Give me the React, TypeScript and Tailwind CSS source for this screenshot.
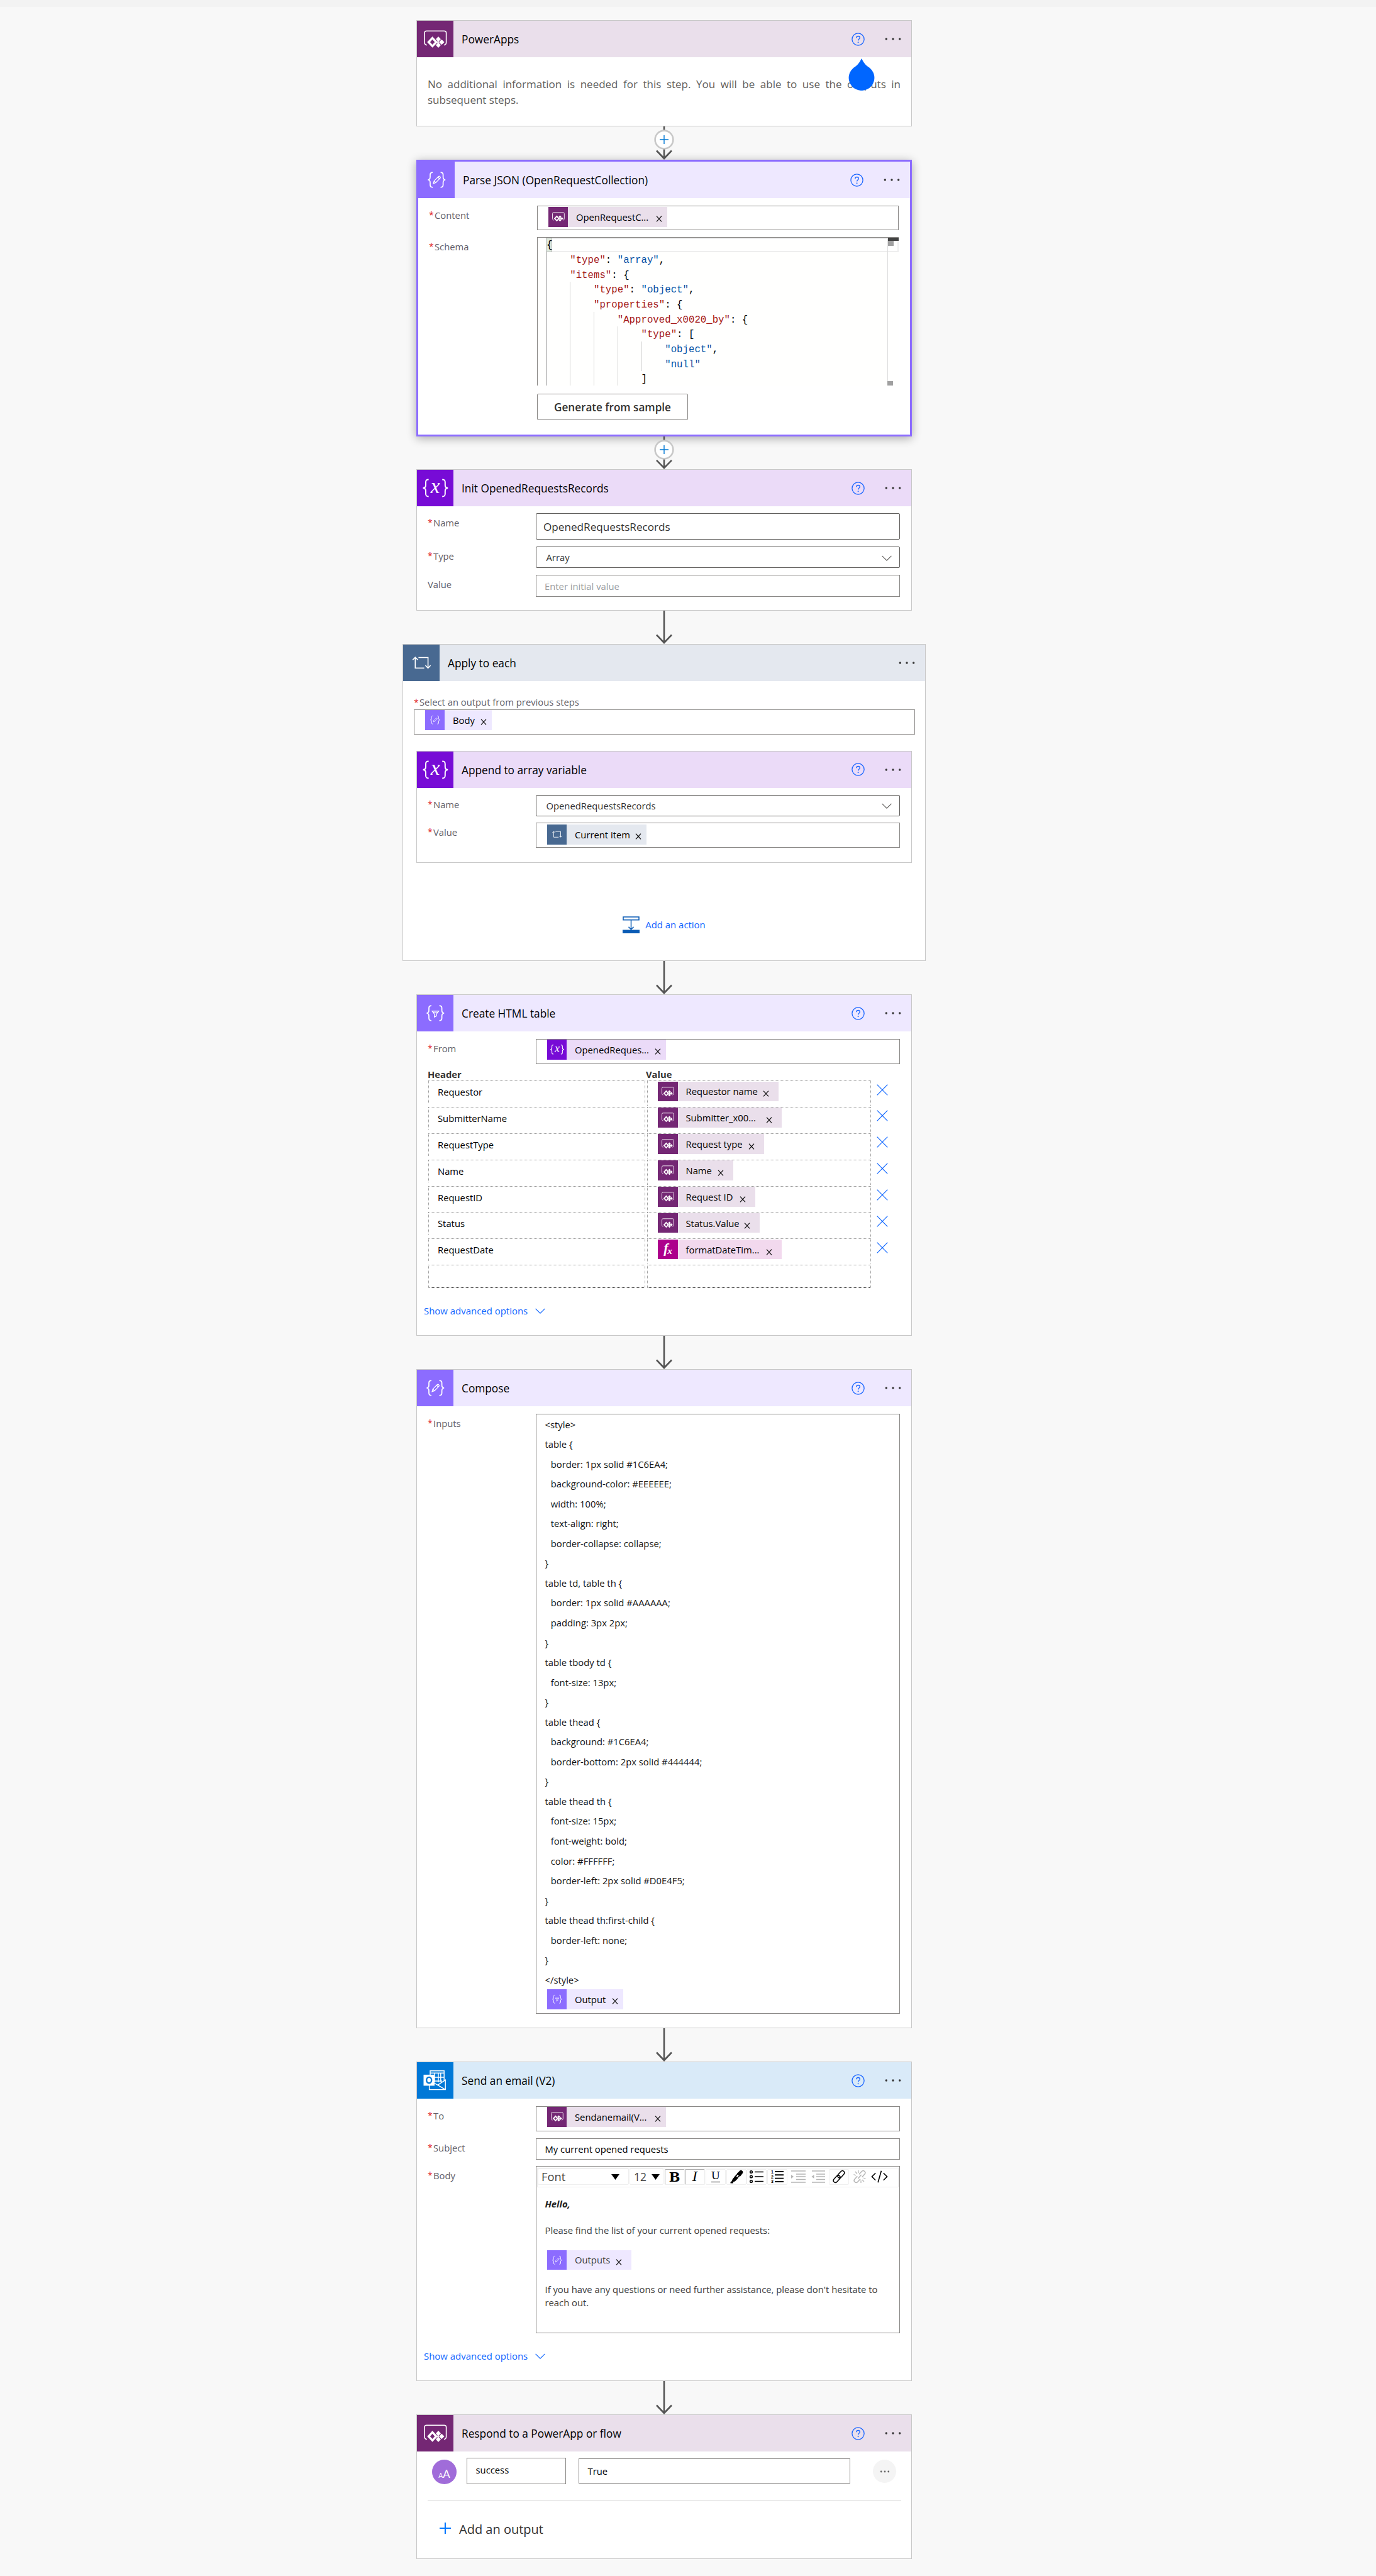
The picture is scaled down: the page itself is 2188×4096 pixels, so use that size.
import React from 'react';

type Kind = 'power' | 'compose' | 'variable' | 'loop' | 'table' | 'outlook' | 'fx';

const TILE: Record<Kind, string> = {
  power: 'bg-[#742774]',
  compose: 'bg-[#8c6cff]',
  variable: 'bg-[#770bd6]',
  loop: 'bg-[#486991]',
  table: 'bg-[#8c6cff]',
  outlook: 'bg-[#0078d7]',
  fx: 'bg-[#ad008c]',
};

const TINT: Record<Kind, string> = {
  power: 'bg-[#eadfeb]',
  compose: 'bg-[#eee8ff]',
  variable: 'bg-[#ebdbf8]',
  loop: 'bg-[#e4e8ef]',
  table: 'bg-[#eee8ff]',
  outlook: 'bg-[#d9eaf8]',
  fx: 'bg-[#f2d9ee]',
};

function SmallBraces() {
  return (
    <g fill="none" stroke="#fff" strokeWidth="1.7">
      <path d="M23 17.2c-3.2 0-4 1.2-4 3.8v3.6c0 2.6-.9 4.2-3.6 4.4 2.700.2 3.600 1.800 3.600 4.400V37c0 2.600.8 3.800 4 3.800" />
      <path d="M35.600 17.200c3.200 0 4 1.200 4 3.800v3.600c0 2.600.9 4.200 3.600 4.400-2.700.2-3.600 1.800-3.600 4.400V37c0 2.600-.8 3.800-4 3.800" />
    </g>
  );
}

function Glyph({ kind, className }: { kind: Kind; className: string }) {
  return (
    <svg viewBox="0 0 58 58" className={className}>
      {kind === 'power' && (
        <g>
          <path
            d="M15.800 38.800C13 38.300 12 36.800 12 34.600V19.600Q12 16.200 15.400 16.200H43.200Q46.600 16.200 46.600 19.600V34.600C46.600 36.800 45.600 38.300 43 38.800"
            fill="none"
            stroke="#fff"
            strokeWidth="1.600"
          />
          <path
            d="M24.600 25 33 33.900 24.600 42.800 16.200 33.900ZM24.600 29.800 20.900 33.900 24.600 38 28.300 33.900Z"
            fill="#fff"
            fillRule="evenodd"
          />
          <path
            d="M34 25 38 29.200 34 33.400 30 29.200ZM34 34.600 38 38.800 34 43 30 38.800ZM39.300 29.800 43.600 34 39.300 38.200 35 34ZM33 31.500 35.300 34 33 36.500 32 34Z"
            fill="#fff"
          />
        </g>
      )}
      {kind === 'compose' && (
        <g>
          <SmallBraces />
          <path
            d="M24 34.800 25.200 30.700 32.400 23.500Q33.300 22.800 34.200 23.500L35 24.300Q35.700 25.200 35 26.100L27.900 33.400ZM31.300 24.700 34 27.300M25.200 30.700 27.900 33.400"
            fill="none"
            stroke="#fff"
            strokeWidth="1.200"
          />
        </g>
      )}
      {kind === 'table' && (
        <g>
          <SmallBraces />
          <path
            d="M24 25.600H34.800L31.200 30.200V33.400L27.600 35.200V30.200ZM26 27.400H32.800"
            fill="none"
            stroke="#fff"
            strokeWidth="1.200"
          />
        </g>
      )}
      {kind === 'variable' && (
        <g>
          <g fill="none" stroke="#fff" strokeWidth="2">
            <path d="M18.600 15.600c-3.800 0-4.600 1.400-4.600 4.400v4.600c0 2.800-1 4.200-4.400 4.400 3.400.2 4.400 1.600 4.400 4.400V38c0 3 .8 4.400 4.600 4.400" />
            <path d="M40.200 15.600c3.800 0 4.600 1.400 4.600 4.400v4.600c0 2.800 1 4.200 4.400 4.400-3.400.2-4.400 1.600-4.400 4.400V38c0 3-.8 4.400-4.600 4.400" />
          </g>
          <text
            x="29.200"
            y="36.600"
            textAnchor="middle"
            fontSize="33"
            fill="#fff"
            fontFamily="'Liberation Serif', serif"
            fontStyle="italic"
          >
            x
          </text>
        </g>
      )}
      {kind === 'loop' && (
        <g fill="none" stroke="#fff" strokeWidth="1.600">
          <path d="M19.300 20.500V37.200H33.600M15.200 24.300 19.300 20.100 23.400 24.300" />
          <path d="M24.400 20.500H39.600V37M35.400 33 39.600 37.300 43.700 33" />
        </g>
      )}
      {kind === 'outlook' && (
        <g>
          <path
            d="M21 20V13.800H43.200V29M21 17.300H43.200M28 17V32M34 17V32M37.800 17V31M28 24H43M28 30H40M19.600 37V43.600H45.200V28.400L33 36.400 28 33.500M33 36.400 45.200 43.600"
            fill="none"
            stroke="#fff"
            strokeWidth="1.400"
          />
          <path d="M10.500 19.900H28V37.400H10.500Z" fill="#fff" />
          <ellipse cx="19.200" cy="28.600" rx="4" ry="4.700" fill="none" stroke="#0078d7" strokeWidth="2.400" />
        </g>
      )}
      {kind === 'fx' && (
        <g fill="#fff" fontFamily="'Liberation Serif', serif" fontStyle="italic" fontWeight="bold">
          <text x="17" y="39" fontSize="40">
            f
          </text>
          <text x="28" y="42" fontSize="28">
            x
          </text>
        </g>
      )}
    </svg>
  );
}

function Dots() {
  return (
    <svg viewBox="0 0 26 6" className="h-[6px] w-[26px]" fill="#333">
      <circle cx="2.300" cy="3" r="1.700" />
      <circle cx="13" cy="3" r="1.700" />
      <circle cx="23.700" cy="3" r="1.700" />
    </svg>
  );
}

function Help() {
  return (
    <svg viewBox="0 0 21 21" className="h-[21px] w-[21px]">
      <circle cx="10.500" cy="10.500" r="9.600" fill="none" stroke="#1a66ff" strokeWidth="1.300" />
      <path
        d="M7.800 8.200C7.800 6.500 9 5.500 10.600 5.500 12.200 5.500 13.300 6.500 13.300 7.900 13.300 9.900 10.600 10.200 10.600 12.600"
        fill="none"
        stroke="#1a66ff"
        strokeWidth="1.300"
      />
      <circle cx="10.600" cy="15.200" r=".95" fill="#1a66ff" />
    </svg>
  );
}

function Header({ kind, title, help = true }: { kind: Kind; title: string; help?: boolean }) {
  return (
    <div className={`flex h-[58px] items-center ${TINT[kind]}`}>
      <div className={`h-[58px] w-[58px] shrink-0 ${TILE[kind]}`}>
        <Glyph kind={kind} className="h-full w-full" />
      </div>
      <h2 className="ml-[13px] flex-1 pt-[2px] text-[17.3px] text-black">{title}</h2>
      {help && (
        <div className="mr-[32px]">
          <Help />
        </div>
      )}
      <div className="mr-[16px]">
        <Dots />
      </div>
    </div>
  );
}

function Card({ children, className }: { children: React.ReactNode; className: string }) {
  return <section className={`shrink-0 border border-[#c8c8c8] bg-white ${className}`}>{children}</section>;
}

function Connector({ plus = false, className = 'h-[53px]' }: { plus?: boolean; className?: string }) {
  return (
    <div className={`relative z-10 flex w-[32px] shrink-0 flex-col items-center ${className}`}>
      <svg viewBox="0 0 32 53" preserveAspectRatio="none" className="h-full w-[32px]">
        <path d="M16 0V51M4 38.500 16 51 28 38.500" fill="none" stroke="#555" strokeWidth="2.600" />
      </svg>
      {plus && (
        <svg viewBox="0 0 32 32" className="absolute left-0 top-[5px] h-[32px] w-[32px]">
          <circle cx="16" cy="16" r="14.400" fill="#fff" stroke="#c8c8c8" strokeWidth="2.600" />
          <path d="M9 16H23M16 9V23" stroke="#0078d4" strokeWidth="1.400" />
        </svg>
      )}
    </div>
  );
}

function Label({ text, required = true }: { text: string; required?: boolean }) {
  return (
    <div className="flex h-[30px] w-[172px] shrink-0 items-center text-[#605e6a]">
      {required && <span className="w-[9px] text-[14px] leading-none text-[#e02020]">*</span>}
      <span>{text}</span>
    </div>
  );
}

function Token({
  kind,
  text,
  width,
  loose = false,
  color = 'text-black',
}: {
  kind: Kind;
  text: string;
  width: string;
  loose?: boolean;
  color?: string;
}) {
  return (
    <div className={`flex h-[31.500px] shrink-0 items-center ${TINT[kind]} ${width}`}>
      <div className={`h-full w-[31.500px] shrink-0 ${TILE[kind]}`}>
        <Glyph kind={kind} className="h-full w-full" />
      </div>
      <span className={`ml-[13px] flex-1 whitespace-nowrap ${color}`}>{text}</span>
      <svg
        viewBox="0 0 10 10"
        className={loose ? 'mr-[15px] mt-[8px] h-[10px] w-[10px]' : 'mr-[8px] mt-[6px] h-[10px] w-[10px]'}
      >
        <path d="M1 .6 9 9.400M9 .6 1 9.400" stroke="#111" strokeWidth="1.300" />
      </svg>
    </div>
  );
}

function Chevron({ className }: { className: string }) {
  return (
    <svg viewBox="0 0 16 9" className={`h-[9px] w-[16px] ${className}`}>
      <path d="M.6.8 8 8.200 15.400.8" fill="none" stroke="currentColor" strokeWidth="1.100" />
    </svg>
  );
}

function Select({ value, className }: { value: string; className: string }) {
  return (
    <div
      className={`flex w-[578.500px] items-center justify-between rounded-[2px] border border-[#605e5c] pl-[15.500px] pr-[12px] text-[#323130] ${className}`}
    >
      <span>{value}</span>
      <Chevron className="mt-[2px] text-[#605e5c]" />
    </div>
  );
}

function Advanced() {
  return (
    <div className="flex h-[24px] items-center pl-[11px] text-[#0f66ff]">
      <span className="text-[14.950px]">Show advanced options</span>
      <Chevron className="ml-[12px]" />
    </div>
  );
}

const SCHEMA: { indent: number; key?: string; value?: string; tail?: string }[] = [
  { indent: 1, key: '"type"', value: '"array"', tail: ',' },
  { indent: 1, key: '"items"', tail: '{' },
  { indent: 2, key: '"type"', value: '"object"', tail: ',' },
  { indent: 2, key: '"properties"', tail: '{' },
  { indent: 3, key: '"Approved_x0020_by"', tail: '{' },
  { indent: 4, key: '"type"', tail: '[' },
  { indent: 5, value: '"object"', tail: ',' },
  { indent: 5, value: '"null"' },
  { indent: 4, tail: ']' },
];

function SchemaEditor() {
  return (
    <div className="relative h-[236.500px] w-[575px] overflow-hidden border-l border-t border-[#8a8886] bg-[#fffffe] font-['Liberation_Mono',monospace] text-[15.730px] leading-[23.640px] text-black">
      <div className="flex h-[23.640px]">
        <span className="ml-[13px] w-[10px] border border-[#b9b9b9] bg-[#dfeadf] leading-[22px]">{'{'}</span>
        <span className="flex-1 border-2 border-l-0 border-[#eee]" />
      </div>
      {SCHEMA.map((line, i) => (
        <div key={i} className="ml-[13.500px] flex h-[23.640px]">
          {Array.from({ length: line.indent }, (_, n) => (
            <span
              key={n}
              className={`w-[37.760px] border-l ${n === 0 ? 'border-[#939393]' : 'border-[#d3d3d3]'}`}
            />
          ))}
          <span className="whitespace-pre pt-[2px]">
            {line.key && <span className="text-[#a31515]">{line.key}</span>}
            {line.key && ': '}
            {line.value && <span className="text-[#0451a5]">{line.value}</span>}
            {line.tail}
          </span>
        </div>
      ))}
      <div className="absolute right-0 top-0 h-full w-[18px] border-l border-[#ddd]">
        <div className="h-[5px] bg-[#424242]" />
        <div className="h-[8px] w-[9px] bg-[#a0a0a0]" />
      </div>
      <div className="absolute bottom-0 right-[9px] h-[7px] w-[9px] bg-[#a0a0a0]" />
    </div>
  );
}

const ROWS: { header: string; kind: Kind; text: string; width: string }[] = [
  { header: 'Requestor', kind: 'power', text: 'Requestor name', width: 'w-[191.500px]' },
  { header: 'SubmitterName', kind: 'power', text: 'Submitter_x00...', width: 'w-[197px]' },
  { header: 'RequestType', kind: 'power', text: 'Request type', width: 'w-[169px]' },
  { header: 'Name', kind: 'power', text: 'Name', width: 'w-[120px]' },
  { header: 'RequestID', kind: 'power', text: 'Request ID', width: 'w-[154.500px]' },
  { header: 'Status', kind: 'power', text: 'Status.Value', width: 'w-[162px]' },
  { header: 'RequestDate', kind: 'fx', text: 'formatDateTim...', width: 'w-[197px]' },
];

function MappingTable() {
  return (
    <div className="ml-[18px]">
      <div className="mt-[7.500px] flex h-[18px] items-center font-bold text-[#323130]">
        <span className="-ml-px w-[347px]">Header</span>
        <span>Value</span>
      </div>
      <div className="mt-px">
        {ROWS.map((row) => (
          <div key={row.header} className="flex h-[41.900px] items-start">
            <div className="flex h-[36px] w-[344.500px] items-center border border-b-0 border-dotted border-[#999] pb-px pl-[14px] text-black">
              {row.header}
            </div>
            <div className="ml-[3.500px] h-[40px] w-[356px] border border-b-0 border-dotted border-[#999] pl-[16px] pt-[.5px]">
              <Token kind={row.kind} text={row.text} width={row.width} loose />
            </div>
            <svg viewBox="0 0 18 18" className="ml-[9px] mt-[5.500px] h-[18px] w-[18px]">
              <path d="M.7.700 17.300 17.300M17.300.700.7 17.300" stroke="#0f66ff" strokeWidth="1.200" />
            </svg>
          </div>
        ))}
        <div className="flex h-[37px]">
          <div className="w-[344.500px] border border-dotted border-[#999] border-b-[#222]" />
          <div className="ml-[3.500px] w-[356px] border border-dotted border-[#999] border-b-[#222]" />
        </div>
      </div>
    </div>
  );
}

const CSS_LINES = [
  '<style>',
  'table {',
  '  border: 1px solid #1C6EA4;',
  '  background-color: #EEEEEE;',
  '  width: 100%;',
  '  text-align: right;',
  '  border-collapse: collapse;',
  '}',
  'table td, table th {',
  '  border: 1px solid #AAAAAA;',
  '  padding: 3px 2px;',
  '}',
  'table tbody td {',
  '  font-size: 13px;',
  '}',
  'table thead {',
  '  background: #1C6EA4;',
  '  border-bottom: 2px solid #444444;',
  '}',
  'table thead th {',
  '  font-size: 15px;',
  '  font-weight: bold;',
  '  color: #FFFFFF;',
  '  border-left: 2px solid #D0E4F5;',
  '}',
  'table thead th:first-child {',
  '  border-left: none;',
  '}',
  '</style>',
];

function ToolButton({ children, active = false, bare = false }: { children: React.ReactNode; active?: boolean; bare?: boolean }) {
  const edge = active ? 'border-[#eee] border-l-[#aaa] border-t-[#aaa]' : bare ? 'border-transparent' : 'border-[#efefef]';
  return (
    <div className={`mr-[.7px] flex h-[25px] w-[32px] shrink-0 items-center justify-center rounded-[2px] border ${edge}`}>
      {children}
    </div>
  );
}

function ToolSvg({ children, color = '#000' }: { children: React.ReactNode; color?: string }) {
  return (
    <svg viewBox="0 0 24 22" className="h-[22px] w-[24px] shrink-0" fill="none" stroke={color} strokeWidth="1.600">
      {children}
    </svg>
  );
}

function Caret() {
  return (
    <svg viewBox="0 0 13 9" className="h-[9px] w-[13px]">
      <path d="M0 0H13L6.500 9Z" fill="#000" />
    </svg>
  );
}

function Toolbar() {
  return (
    <div className="ml-px mt-[2px] flex h-[31px] w-[575px] items-center border border-[#eee] pb-[3px]">
      <div className="mr-px flex h-[26px] w-[145px] shrink-0 items-center justify-between rounded-[2px] border border-[#efefef] pl-[5px] pr-[14px] text-[18.300px] text-[#444]">
        Font
        <Caret />
      </div>
      <div className="mr-[1.500px] flex h-[26px] w-[54px] shrink-0 items-center justify-between rounded-[2px] border border-[#efefef] pl-[6px] pr-[5px] text-[17.500px] text-[#444]">
        12
        <Caret />
      </div>
      <ToolButton active>
        <span className="font-['DejaVu_Serif',serif] text-[21px] font-bold leading-none text-black">B</span>
      </ToolButton>
      <ToolButton active>
        <span className="font-['DejaVu_Serif',serif] text-[21px] italic leading-none text-black">I</span>
      </ToolButton>
      <ToolButton>
        <span className="h-[18px] border-b-[1.500px] border-black font-['DejaVu_Serif',serif] text-[17px] leading-[15px] text-black">U</span>
      </ToolButton>
      <ToolButton>
        <ToolSvg>
          <path d="M6.500 16 14 6.500 17 9 9 17.500 5.500 18.500Z" fill="#fff" strokeWidth="1.800" />
          <path d="M7 15 10.500 10.500 13.500 13.500 9.500 17.500 5 19Z" fill="#000" />
          <path d="M14 6 17.500 2.500C19.500.5 23 3 21 5.500L17.800 9.500Z" fill="#000" />
          <path d="M2.500 20.500H7" strokeWidth="2" />
        </ToolSvg>
      </ToolButton>
      <ToolButton>
        <ToolSvg>
          <circle cx="3.500" cy="3.500" r="1.800" />
          <circle cx="3.500" cy="11" r="1.800" />
          <circle cx="3.500" cy="18.500" r="1.800" />
          <path d="M9 3.500H23M9 11H23M9 18.500H23" />
        </ToolSvg>
      </ToolButton>
      <ToolButton>
        <ToolSvg>
          <path d="M8 3H22M8 8.300H22M8 13.600H22M8 19H22" strokeWidth="1.900" />
          <g fill="#000" stroke="none" fontFamily="'Liberation Sans', sans-serif" fontSize="7" fontWeight="bold">
            <text x="2" y="6">1</text>
            <text x="2" y="13.500">2</text>
            <text x="2" y="21">3</text>
          </g>
        </ToolSvg>
      </ToolButton>
      <ToolButton bare>
        <ToolSvg color="#b5b5b5">
          <path d="M1 2H24M9 7H24M9 11H24M9 15.500H24M1 20H24" />
          <path d="M1 8 5 11 1 14Z" fill="#b5b5b5" stroke="none" />
        </ToolSvg>
      </ToolButton>
      <ToolButton bare>
        <ToolSvg color="#b5b5b5">
          <path d="M2 2H23M9 7H23M9 11H23M9 15.500H23M2 20H23" />
          <path d="M5.500 8 1.500 11 5.500 14Z" fill="#b5b5b5" stroke="none" />
        </ToolSvg>
      </ToolButton>
      <ToolButton>
        <ToolSvg>
          <g transform="rotate(-48 12 11)" strokeWidth="1.500">
            <rect x="0.500" y="7.800" width="13" height="6.400" rx="3.200" />
            <rect x="10.500" y="7.800" width="13" height="6.400" rx="3.200" />
          </g>
        </ToolSvg>
      </ToolButton>
      <ToolButton bare>
        <ToolSvg color="#b5b5b5">
          <g transform="rotate(-48 12 11)" strokeWidth="1.500">
            <path d="M10 14.200H3.700a3.200 3.200 0 0 1 0-6.400H10" />
            <path d="M14 7.800H20.300a3.200 3.200 0 0 1 0 6.400H14M8 11H16" />
          </g>
          <path d="M5 3 8 6.500M10 1V5M2.500 7.500 6 9M19 19 16 16M14 21V17M21.500 14.500 18 13" strokeWidth="1.200" />
        </ToolSvg>
      </ToolButton>
      <svg viewBox="0 0 28 22" className="ml-[2px] h-[22px] w-[27px]" fill="none" stroke="#000" strokeWidth="1.700">
        <path d="M7.500 5 1.500 11 7.500 17M20.500 5 26.500 11 20.500 17M17 1.500 11.500 20.500" />
      </svg>
    </div>
  );
}

const FIELD = 'w-[578.500px] border border-[#8a8886]';

export default function App() {
  return (
    <div className="h-[4096px] w-[2188px] overflow-hidden bg-[#f8f8f8] font-['Open_Sans',sans-serif] text-[14.800px] leading-[20px]">
      <div className="h-[11px] bg-[#f3f3f3]" />
      <main className="ml-[640px] mt-[21px] flex w-[832px] flex-col items-center">
        <Card className="relative h-[169px] w-[788px]">
          <Header kind="power" title="PowerApps" />
          <p className="px-[17px] pt-[29.500px] text-justify text-[17px] leading-[25px] text-[#605e5c]">
            No additional information is needed for this step. You will be able to use the outputs in subsequent steps.
          </p>
          <svg viewBox="0 0 42 52" className="absolute left-[686px] top-[60px] h-[51px] w-[42px]" fill="#0066ff">
            <path d="M21 0C24 6 26.500 9.500 31 13A20.800 20.800 0 1 1 11 13C15.500 9.500 18 6 21 0Z" />
          </svg>
        </Card>
        <Connector plus />
        <section className="h-[440px] w-[788px] shrink-0 border-[3px] border-[#8c6cff] bg-white shadow-[0_3px_14px_rgba(0,0,0,0.32)]">
          <Header kind="compose" title="Parse JSON (OpenRequestCollection)" />
          <div className="flex flex-col pl-[17px] pt-[12px]">
            <div className="flex">
              <Label text="Content" />
              <div className="h-[39px] w-[575px] border border-[#8a8886] pl-[16.500px] pt-px">
                <Token kind="power" text="OpenRequestC..." width="w-[189.500px]" />
              </div>
            </div>
            <div className="mt-[10.500px] flex">
              <Label text="Schema" />
              <SchemaEditor />
            </div>
            <button className="ml-[172px] mt-[13px] h-[42px] w-[240px] rounded-[2px] border border-[#8a8886] pt-[2px] text-[17.100px] font-semibold text-[#323130]">
              Generate from sample
            </button>
          </div>
        </section>
        <Connector plus className="h-[52px]" />
        <Card className="h-[225px] w-[788px]">
          <Header kind="variable" title="Init OpenedRequestsRecords" />
          <div className="flex flex-col pl-[17px] pt-[11px]">
            <div className="flex">
              <Label text="Name" />
              <div className="flex h-[42px] w-[578.500px] items-center rounded-[2px] border border-[#605e5c] pl-[11px] pt-[2.500px] text-[17.150px] text-[#323130]">
                OpenedRequestsRecords
              </div>
            </div>
            <div className="mt-[11px] flex">
              <Label text="Type" />
              <Select value="Array" className="h-[34px]" />
            </div>
            <div className="mt-[10.500px] flex">
              <Label text="Value" required={false} />
              <div className={`flex h-[35px] items-center pl-[13px] pt-[1.500px] text-[#9a9da1] ${FIELD}`}>
                Enter initial value
              </div>
            </div>
          </div>
        </Card>
        <Connector />
        <Card className="h-[504px] w-[832px]">
          <Header kind="loop" title="Apply to each" help={false} />
          <div className="mt-[22.500px] flex h-[22px] items-start pl-[17px] text-[#605e6a]">
            <span className="w-[9px] pt-[4px] text-[14px] leading-none text-[#e02020]">*</span>
            <span>Select an output from previous steps</span>
          </div>
          <div className="ml-[17px] h-[40px] w-[797px] border border-[#8a8886] pl-[16.500px] pt-[.5px]">
            <Token kind="compose" text="Body" width="w-[106px]" />
          </div>
          <Card className="ml-[21px] mt-[26px] h-[178px] w-[788px]">
            <Header kind="variable" title="Append to array variable" />
            <div className="flex flex-col pl-[17px] pt-[11px]">
              <div className="flex">
                <Label text="Name" />
                <Select value="OpenedRequestsRecords" className="h-[34px]" />
              </div>
              <div className="mt-[10.500px] flex">
                <Label text="Value" />
                <div className={`h-[40px] pl-[16.500px] pt-[2px] ${FIELD}`}>
                  <Token kind="loop" text="Current item" width="w-[158px]" />
                </div>
              </div>
            </div>
          </Card>
          <div className="mt-[85px] flex items-center justify-center text-[#0f66ff]">
            <svg viewBox="0 0 27 27" className="h-[27px] w-[27px]" fill="none" stroke="#0a5bb5" strokeWidth="1.500">
              <path d="M1 1H26V5.800H1ZM13.500 6V20.500M9.500 16.800 13.500 21 17.500 16.800" />
              <path d="M0 21.500H27V27H0Z" fill="#0a5bb5" stroke="none" />
            </svg>
            <span className="ml-[9px] pb-px text-[14.900px]">Add an action</span>
          </div>
        </Card>
        <Connector />
        <Card className="h-[543px] w-[788px]">
          <Header kind="table" title="Create HTML table" />
          <div className="flex pl-[17px] pt-[11.500px]">
            <Label text="From" />
            <div className={`h-[40px] pl-[16.500px] pt-[.5px] ${FIELD}`}>
              <Token kind="variable" text="OpenedReques..." width="w-[189px]" />
            </div>
          </div>
          <MappingTable />
          <div className="mt-[24px]">
            <Advanced />
          </div>
        </Card>
        <Connector />
        <Card className="h-[1048px] w-[788px]">
          <Header kind="compose" title="Compose" />
          <div className="flex pl-[17px] pt-[12px]">
            <Label text="Inputs" />
            <div className={`h-[954px] pl-[13.500px] pt-[.5px] ${FIELD}`}>
              {CSS_LINES.map((line, i) => (
                <div
                  key={i}
                  className={`h-[31.550px] whitespace-pre leading-[31.550px] text-[#111] ${line.startsWith(' ') ? 'pl-[1.500px]' : ''}`}
                >
                  {line}
                </div>
              ))}
              <div className="-mt-px pl-[3px]">
                <Token kind="table" text="Output" width="w-[121px]" />
              </div>
            </div>
          </div>
        </Card>
        <Connector />
        <Card className="h-[508px] w-[788px]">
          <Header kind="outlook" title="Send an email (V2)" />
          <div className="flex flex-col pl-[17px] pt-[11.500px]">
            <div className="flex">
              <Label text="To" />
              <div className={`h-[40.500px] pl-[16.500px] pt-[.5px] ${FIELD}`}>
                <Token kind="power" text="Sendanemail(V..." width="w-[189px]" />
              </div>
            </div>
            <div className="mt-[10.500px] flex">
              <Label text="Subject" />
              <div className={`flex h-[34px] items-center pl-[13.500px] pt-px text-black ${FIELD}`}>
                My current opened requests
              </div>
            </div>
            <div className="mt-[10.500px] flex">
              <Label text="Body" />
              <div className={`h-[266px] text-[#3c3c3c] ${FIELD}`}>
                <Toolbar />
                <div className="pl-[13.500px] leading-[21px]">
                  <p className="mt-[16px] font-bold italic text-[#222]">Hello,</p>
                  <p className="mt-[21px]">Please find the list of your current opened requests:</p>
                  <div className="mt-[20.500px] pl-[3px]">
                    <Token kind="compose" text="Outputs" width="w-[134.500px]" loose color="text-[#3c3c3c]" />
                  </div>
                  <p className="mt-[21px] w-[540px]">
                    If you have any questions or need further assistance, please don't hesitate to reach out.
                  </p>
                </div>
              </div>
            </div>
          </div>
          <div className="mt-[24px]">
            <Advanced />
          </div>
        </Card>
        <Connector />
        <Card className="h-[230px] w-[788px]">
          <Header kind="power" title="Respond to a PowerApp or flow" />
          <div className="flex items-start pl-[24px] pt-[10px]">
            <div className="mt-[3px] flex h-[39px] w-[39px] items-end justify-center rounded-full bg-[#a06cd9] pb-[10px] leading-none text-white">
              <span className="text-[11px] leading-[9px]">A</span>
              <span className="text-[18px] leading-[14px]">A</span>
            </div>
            <div className="ml-[15.500px] h-[42px] w-[158px] border border-[#8a8886] pl-[14px] pt-[8px] leading-[20px] text-black">
              success
            </div>
            <div className="ml-[20px] mt-px flex h-[40px] w-[432px] items-center border border-[#8a8886] pb-px pl-[14px] text-black">
              True
            </div>
            <div className="ml-[36.500px] mt-[3px] flex h-[37px] w-[37px] items-center justify-center rounded-full bg-[#f4f4f4]">
              <svg viewBox="0 0 16 4" className="h-[4px] w-[16px]" fill="#666">
                <circle cx="2.200" cy="2" r="1.400" />
                <circle cx="8" cy="2" r="1.400" />
                <circle cx="13.800" cy="2" r="1.400" />
              </svg>
            </div>
          </div>
          <div className="ml-[17px] mt-[26px] h-px w-[753px] bg-[#d2d2d2]" />
          <div className="mt-[30px] flex h-[30px] items-center pl-[36px]">
            <svg viewBox="0 0 18 18" className="mb-[4px] h-[18px] w-[18px]">
              <path d="M0 9H18M9 0V18" stroke="#0078ff" strokeWidth="2.200" />
            </svg>
            <span className="ml-[13px] text-[20px] text-[#323130]">Add an output</span>
          </div>
        </Card>
      </main>
    </div>
  );
}
